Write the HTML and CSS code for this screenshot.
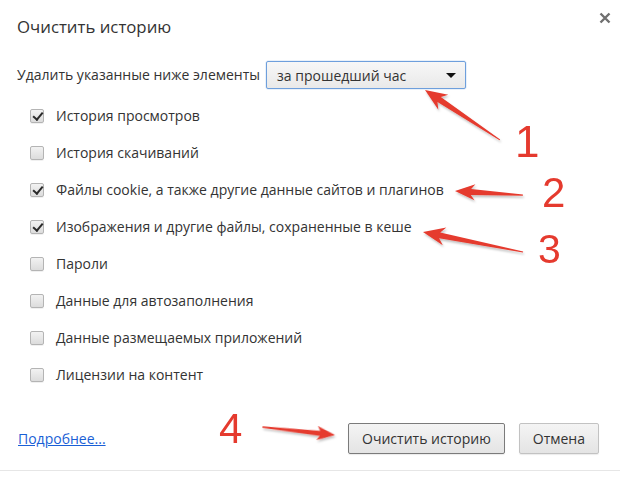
FILE: index.html
```html
<!DOCTYPE html>
<html lang="ru">
<head>
<meta charset="utf-8">
<title>Очистить историю</title>
<link rel="stylesheet" href="styles.css">
</head>
<body>
<div class="dialog">
  <div class="header">
    <h1 class="title">Очистить историю</h1>
    <button class="close" aria-label="Закрыть">
      <svg width="12" height="12" viewBox="0 0 12 12"><path d="M1.5 1.5 L10.5 10.5 M10.5 1.5 L1.5 10.5" stroke="#707070" stroke-width="2.4" fill="none"/></svg>
    </button>
  </div>
  <div class="time-row">
    <span class="label">Удалить указанные ниже элементы</span>
    <div class="select">
      <span>за прошедший час</span>
      <span class="caret"></span>
    </div>
  </div>
  <ul class="options">
    <li class="option"><span class="cb checked"></span><span>История просмотров</span></li>
    <li class="option"><span class="cb"></span><span>История скачиваний</span></li>
    <li class="option"><span class="cb checked"></span><span>Файлы cookie, а также другие данные сайтов и плагинов</span></li>
    <li class="option"><span class="cb checked"></span><span>Изображения и другие файлы, сохраненные в кеше</span></li>
    <li class="option"><span class="cb"></span><span>Пароли</span></li>
    <li class="option"><span class="cb"></span><span>Данные для автозаполнения</span></li>
    <li class="option"><span class="cb"></span><span>Данные размещаемых приложений</span></li>
    <li class="option"><span class="cb"></span><span>Лицензии на контент</span></li>
  </ul>
  <div class="footer">
    <a class="more" href="#">Подробнее...</a>
    <div class="buttons">
      <button class="btn default">Очистить историю</button>
      <button class="btn">Отмена</button>
    </div>
  </div>
</div>
<svg class="notes" width="631" height="487" viewBox="0 0 631 487">
  <defs>
    <filter id="sh" x="-20%" y="-20%" width="140%" height="160%">
      <feDropShadow dx="1" dy="2" stdDeviation="1" flood-color="#000" flood-opacity="0.25"/>
    </filter>
  </defs>
  <g fill="#e53a2e" filter="url(#sh)">
    <polygon transform="translate(425 90) rotate(33.7)" points="0,0 22,-9 17,-3 90,-0.5 90,0.5 17,3 22,9"/>
    <polygon transform="translate(455 191) rotate(3.4)" points="0,0 20,-8 16,-3 68,-0.6 68,0.6 16,3 20,8"/>
    <polygon transform="translate(423 232) rotate(11.3)" points="0,0 22,-9 17,-3 102,-0.6 102,0.6 17,3 22,9"/>
    <polygon transform="translate(335 435) rotate(186.25)" points="0,0 18,-7 15,-2.5 73,-0.8 73,0.8 15,2.5 18,7"/>
  </g>
  <g class="num" fill="#e53a2e">
    <text x="515" y="157" font-size="44">1</text>
    <text x="542" y="207" font-size="42">2</text>
    <text x="538" y="263" font-size="41">3</text>
    <text x="219" y="443" font-size="42">4</text>
  </g>
</svg>
</body>
</html>
```

FILE: styles.css
```css
html, body {
  margin: 0;
  padding: 0;
  background: #fff;
}
body {
  font-family: "Open Sans", "Noto Sans", sans-serif;
  font-size: 14px;
  color: #333;
  position: relative;
  width: 631px;
  height: 487px;
  overflow: hidden;
}
.dialog {
  width: 620px;
}
.header {
  position: relative;
  padding: 17px 17px 0 17px;
}
.title {
  margin: 0;
  font-size: 16.8px;
  font-weight: normal;
  line-height: 20px;
  color: #333;
}
.close {
  position: absolute;
  top: 11px;
  right: 8px;
  width: 14px;
  height: 14px;
  padding: 1px;
  border: 0;
  background: none;
  display: flex;
  align-items: center;
  justify-content: center;
}
.time-row {
  display: flex;
  align-items: center;
  gap: 6px;
  margin-top: 24px;
  padding-left: 17px;
}
.label {
  line-height: 28px;
}
.select {
  box-sizing: border-box;
  width: 200px;
  height: 28px;
  border: 1px solid #6e9fdc;
  border-radius: 2px;
  background: linear-gradient(#f7f7f7, #e9e9e9);
  box-shadow: 0 0 0 0.5px rgba(110,159,220,0.3);
  display: flex;
  align-items: center;
  justify-content: space-between;
  padding: 0 9px 0 10px;
}
.caret {
  width: 0;
  height: 0;
  border-left: 5px solid transparent;
  border-right: 5px solid transparent;
  border-top: 5px solid #111;
}
.options {
  list-style: none;
  margin: 8px 0 0 0;
  padding: 0 0 0 30px;
}
.option {
  height: 37px;
  display: flex;
  align-items: center;
  gap: 12px;
}
.cb {
  box-sizing: border-box;
  width: 14px;
  height: 14px;
  border: 1px solid #b4b4b4;
  border-radius: 2px;
  background: linear-gradient(#f2f2f2, #dcdcdc);
  box-shadow: 0 1px 0 rgba(0,0,0,0.06);
  position: relative;
  flex: none;
}
.cb.checked::after {
  content: "";
  position: absolute;
  left: 3.5px;
  top: 0px;
  width: 3.5px;
  height: 8px;
  border-right: 2.8px solid #2a2a2a;
  border-bottom: 2.8px solid #2a2a2a;
  transform: rotate(40deg);
}
.footer {
  display: flex;
  align-items: center;
  margin-top: 30px;
  padding: 0 21px 16px 18px;
  border-bottom: 1px solid #e6e6e6;
}
.more {
  color: #1a5fd6;
  text-decoration: underline;
}
.buttons {
  margin-left: auto;
  display: flex;
  gap: 14px;
}
.btn {
  font-family: "Open Sans", "Noto Sans", sans-serif;
  font-size: 14px;
  color: #333;
  height: 31px;
  padding: 0 13px;
  border: 1px solid #c2c2c2;
  border-radius: 2px;
  background: linear-gradient(#f4f4f4, #e4e4e4);
  box-shadow: 0 1px 1px rgba(0,0,0,0.08);
}
.btn.default {
  border-color: #7b7b7b;
}
.notes {
  position: absolute;
  left: 0;
  top: 0;
  pointer-events: none;
}
.num text {
  font-family: "Liberation Sans", Arial, sans-serif;
}
```
